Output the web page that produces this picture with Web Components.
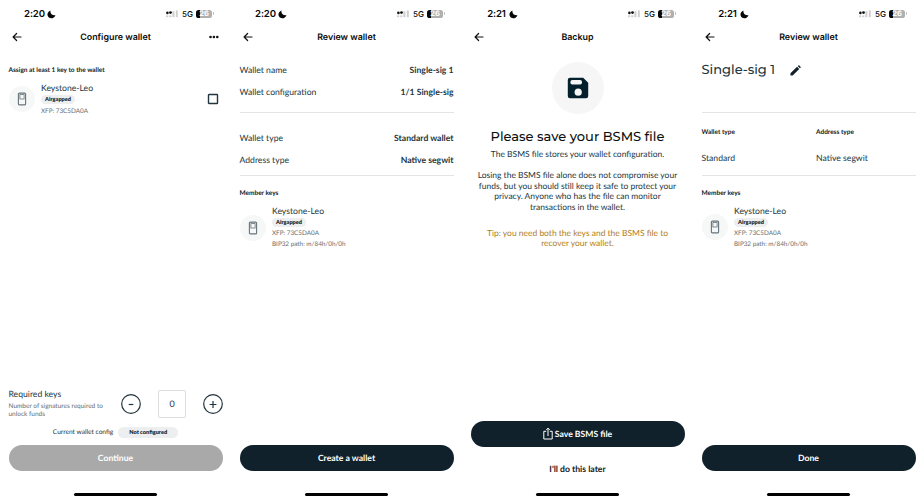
<!DOCTYPE html>
<html lang="en">
<head>
<meta charset="utf-8">
<title>Wallet setup</title>
<style>
  body {
    margin: 0;
    width: 924px;
    height: 500px;
    overflow: hidden;
    display: grid;
    grid-template-columns: repeat(4, 231px);
    background: #fff;
    color: #22363e;
    font-family: Lato, "Liberation Sans", sans-serif;
    font-size: 8.65px;
    text-rendering: geometricPrecision;
  }
</style>
</head>
<body>
  <phone-screen time="2:20" heading="Configure wallet" menu>
    <section-label style="margin-top: 17px">Assign at least 1 key to the wallet</section-label>
    <key-card style="margin-top: 5px" name="Keystone-Leo" xfp="73C5DA0A" selectable></key-card>
    <key-counter slot="footer" value="0"></key-counter>
    <app-button slot="footer" disabled>Continue</app-button>
  </phone-screen>

  <phone-screen time="2:20" heading="Review wallet">
    <detail-row style="margin-top: 12.25px" label="Wallet name">Single-sig 1</detail-row>
    <detail-row label="Wallet configuration">1/1 Single-sig</detail-row>
    <rule-line style="margin-top: 9.25px"></rule-line>
    <detail-row style="margin-top: 14.75px" label="Wallet type">Standard wallet</detail-row>
    <detail-row label="Address type">Native segwit</detail-row>
    <rule-line style="margin-top: 5px"></rule-line>
    <section-label style="margin-top: 10.5px">Member keys</section-label>
    <key-card style="margin-top: 5px" name="Keystone-Leo" xfp="73C5DA0A" path="m/84h/0h/0h"></key-card>
    <app-button slot="footer">Create a wallet</app-button>
  </phone-screen>

  <phone-screen time="2:21" heading="Backup">
    <backup-notice heading="Please save your BSMS file">
      <span slot="lead">The BSMS file stores your wallet configuration.</span>
      Losing the BSMS file alone does not compromise your<br>funds, but you should still keep it safe to protect your<br>privacy. Anyone who has the file can monitor<br>transactions in the wallet.
      <span slot="tip">Tip: you need both the keys and the BSMS file to<br>recover your wallet.</span>
    </backup-notice>
    <app-button slot="footer" share>Save BSMS file</app-button>
    <app-button slot="footer" plain>I'll do this later</app-button>
  </phone-screen>

  <phone-screen time="2:21" heading="Review wallet">
    <wallet-title>Single-sig 1</wallet-title>
    <rule-line></rule-line>
    <wallet-types>
      <section-label>Wallet type</section-label>
      <section-label>Address type</section-label>
      <span>Standard</span>
      <span>Native segwit</span>
    </wallet-types>
    <rule-line></rule-line>
    <section-label style="margin-top: 10.5px">Member keys</section-label>
    <key-card style="margin-top: 5px" name="Keystone-Leo" xfp="73C5DA0A" path="m/84h/0h/0h"></key-card>
    <app-button slot="footer">Done</app-button>
  </phone-screen>

<script>
class PhoneScreen extends HTMLElement {
  connectedCallback() {
    this.attachShadow({ mode: 'open' });
    this.shadowRoot.innerHTML = `
      <style>
        :host {
          display: flex;
          flex-direction: column;
          box-sizing: border-box;
          width: 231px;
          height: 500px;
          padding: 0 8.5px;
          background: #fff;
        }
        svg { display: block; }
        .status {
          display: flex;
          align-items: center;
          height: 28px;
          padding: 0 9px 0 15.5px;
          color: #080808;
          font-family: Inter, sans-serif;
        }
        .time {
          width: 21px;
          margin-right: 1.5px;
          font-size: 9.6px;
          font-weight: 600;
          letter-spacing: -0.1px;
          text-align: center;
        }
        .signal { margin-left: auto; }
        .net {
          margin: 0 3.5px 0 4px;
          font-size: 8px;
          font-weight: 500;
        }
        .battery {
          display: flex;
          align-items: center;
          gap: 0.6px;
        }
        .cell {
          width: 15.5px;
          height: 8.4px;
          border-radius: 2.6px;
          background: linear-gradient(90deg, #080808 26%, #b0b0b0 26%);
          color: #fff;
          font-size: 7.6px;
          font-weight: 700;
          line-height: 8.6px;
          text-align: center;
        }
        .nub {
          width: 1px;
          height: 3px;
          border-radius: 0 1px 1px 0;
          background: #bbb;
        }
        .nav {
          display: grid;
          grid-template-columns: 20px 1fr 20px;
          align-items: center;
          height: 19px;
          color: #0b0b0b;
        }
        .nav .back { margin: -1px 0 0 3.5px; }
        h1 {
          margin: 0;
          font: 600 8.9px/18px Inter, sans-serif;
          text-align: center;
        }
        .dots { margin: -1px 0 0 6px; }
        main { flex: 1; }
        .home {
          width: 83px;
          height: 3px;
          margin: 22px auto 4px;
          border-radius: 2px;
          background: #000;
        }
      </style>
      <div class="status">
        <span class="time">${this.getAttribute('time')}</span>
        <svg width="9" height="9" viewBox="0 0 9 9"><path d="M3.5 .4C2.9 3.4 5 5.6 8.5 5.2 7.5 8.2 4.1 9.2 1.9 7.5-.6 5.5.3 1.5 3.5.4z" fill="#080808"/></svg>
        <svg class="signal" width="12" height="8" viewBox="0 0 12 8">
          <g fill="#cfcfcf">
            <rect x="0" y="5.4" width="2.2" height="1.8"/><rect x="3.2" y="5.4" width="2.2" height="1.8"/>
            <rect x="6.4" y="1.2" width="2" height="6"/><rect x="9.8" y=".4" width="2" height="6.8"/>
          </g>
          <circle cx="1.4" cy="2.9" r="1.3" fill="#111"/><circle cx="4.5" cy="2.6" r="1.4" fill="#111"/>
        </svg>
        <span class="net">5G</span>
        <div class="battery"><div class="cell">26</div><div class="nub"></div></div>
      </div>
      <div class="nav">
        <svg class="back" width="10" height="10" viewBox="0 0 10 10" fill="none" stroke="#111" stroke-width="1.2" stroke-linecap="round" stroke-linejoin="round"><path d="M9 5H1.2M4.6 1.5L1.1 5l3.5 3.5"/></svg>
        <h1>${this.getAttribute('heading')}</h1>
        ${this.hasAttribute('menu') ? '<svg class="dots" width="10" height="4" viewBox="0 0 10 4" fill="#111"><circle cx="1.5" cy="2" r="1.3"/><circle cx="4.9" cy="2" r="1.3"/><circle cx="8.3" cy="2" r="1.3"/></svg>' : ''}
      </div>
      <main><slot></slot></main>
      <slot name="footer"></slot>
      <div class="home"></div>
    `;
  }
}

class SectionLabel extends HTMLElement {
  connectedCallback() {
    this.attachShadow({ mode: 'open' });
    this.shadowRoot.innerHTML = `
      <style>
        :host {
          display: block;
          padding-top: 1px;
          color: #111a1e;
          font-size: 6.5px;
          font-weight: 700;
          line-height: 12px;
        }
      </style>
      <slot></slot>
    `;
  }
}

class RuleLine extends HTMLElement {
  connectedCallback() {
    this.attachShadow({ mode: 'open' });
    this.shadowRoot.innerHTML = `
      <style>
        :host {
          display: block;
          height: 1px;
          background: #e3e4e6;
        }
      </style>
    `;
  }
}

class PillBadge extends HTMLElement {
  connectedCallback() {
    this.attachShadow({ mode: 'open' });
    this.shadowRoot.innerHTML = `
      <style>
        :host {
          display: block;
          box-sizing: border-box;
          width: 34px;
          height: 9px;
          border-radius: 5px;
          background: #eceeef;
          color: #182a32;
          font-size: 5.6px;
          font-weight: 800;
          line-height: 9px;
          text-align: center;
        }
        :host([wide]) {
          width: 60px;
          height: 11px;
          line-height: 11px;
          border-radius: 6px;
        }
      </style>
      <slot></slot>
    `;
  }
}

class KeyCard extends HTMLElement {
  connectedCallback() {
    const path = this.getAttribute('path');
    this.attachShadow({ mode: 'open' });
    this.shadowRoot.innerHTML = `
      <style>
        :host {
          display: flex;
          align-items: center;
        }
        .avatar {
          display: grid;
          place-items: center;
          width: 26px;
          height: 26px;
          margin-right: 6.5px;
          border-radius: 50%;
          background: #f6f7f7;
        }
        .info { flex: 1; }
        .name {
          font-size: 8.65px;
          line-height: 12px;
        }
        pill-badge { margin: 1px 0 1.5px; }
        .meta {
          color: #666d71;
          font-size: 6.35px;
          line-height: 11px;
        }
        .check { margin-right: 4px; }
      </style>
      <div class="avatar">
        <svg width="10" height="14" viewBox="0 0 10 14" fill="none" stroke="#66747a"><rect x="1.4" y="1.1" width="7.2" height="11.8" rx="1" stroke-width="1.1"/><rect x="2.9" y="2.6" width="4.2" height="4.4" stroke-width=".8"/></svg>
      </div>
      <div class="info">
        <div class="name">${this.getAttribute('name')}</div>
        <pill-badge>Airgapped</pill-badge>
        <div class="meta">XFP: ${this.getAttribute('xfp')}</div>
        ${path ? `<div class="meta">BIP32 path: ${path}</div>` : ''}
      </div>
      ${this.hasAttribute('selectable') ? '<svg class="check" width="12" height="12" viewBox="0 0 12 12" fill="none" stroke="#22363e" stroke-width="1.4"><rect x="1.5" y="1.5" width="9" height="9" rx=".5"/></svg>' : ''}
    `;
  }
}

class DetailRow extends HTMLElement {
  connectedCallback() {
    this.attachShadow({ mode: 'open' });
    this.shadowRoot.innerHTML = `
      <style>
        :host {
          display: flex;
          justify-content: space-between;
          line-height: 21.5px;
        }
        b { font-weight: 700; }
      </style>
      <span>${this.getAttribute('label')}</span>
      <b><slot></slot></b>
    `;
  }
}

class KeyCounter extends HTMLElement {
  connectedCallback() {
    this.attachShadow({ mode: 'open' });
    this.shadowRoot.innerHTML = `
      <style>
        :host { display: block; }
        .row {
          display: flex;
          align-items: center;
          margin-right: -2px;
        }
        .text { width: 111.5px; }
        .title {
          font-size: 8.65px;
          line-height: 12px;
        }
        .hint {
          margin-top: 3px;
          color: #666d71;
          font-size: 6.5px;
          line-height: 8px;
        }
        .row svg {
          display: block;
          flex: none;
          fill: none;
          stroke: #22343c;
          stroke-width: 1.2;
        }
        .value {
          box-sizing: border-box;
          flex: none;
          width: 28px;
          height: 28px;
          margin: 0 15.5px 0 16px;
          border: 1px solid #dcdfe0;
          border-radius: 2px;
          font-size: 9px;
          line-height: 26px;
          text-align: center;
        }
        .config {
          display: flex;
          align-items: center;
          justify-content: center;
          gap: 5px;
          margin: 8px 0 7px;
          font-size: 6.6px;
          line-height: 11px;
        }
      </style>
      <div class="row">
        <div class="text">
          <div class="title">Required keys</div>
          <div class="hint">Number of signatures required to<br>unlock funds</div>
        </div>
        <svg width="22" height="22" viewBox="0 0 22 22"><circle cx="11" cy="11" r="9.3"/><path d="M8.7 11.5h4.6"/></svg>
        <div class="value">${this.getAttribute('value')}</div>
        <svg width="22" height="22" viewBox="0 0 22 22"><circle cx="11" cy="11" r="9.3"/><path d="M7.6 11.5h6.8M11 8.1v6.8"/></svg>
      </div>
      <div class="config">Current wallet config<pill-badge wide>Not configured</pill-badge></div>
    `;
  }
}

class BackupNotice extends HTMLElement {
  connectedCallback() {
    this.attachShadow({ mode: 'open' });
    this.shadowRoot.innerHTML = `
      <style>
        :host {
          display: block;
          padding-top: 15px;
          font-size: 8.47px;
          line-height: 10.6px;
          text-align: center;
          white-space: nowrap;
        }
        .disc {
          display: grid;
          place-items: center;
          width: 52px;
          height: 52px;
          margin: 0 auto 13.5px;
          border-radius: 50%;
          background: #f6f6f6;
        }
        h2 {
          margin: 0 -10px 3.5px;
          color: #0c0f10;
          font: 500 13px/18px Montserrat, Inter, sans-serif;
        }
        .body { margin: 10.4px -6px 15.2px; }
        .tip { color: #b07d1e; }
      </style>
      <div class="disc">
        <svg width="22" height="22" viewBox="0 0 22 22"><path d="M3 .8h13.2L21.2 5.8V19a2.2 2.2 0 0 1-2.2 2.2H3A2.2 2.2 0 0 1 .8 19V3A2.2 2.2 0 0 1 3 .8z" fill="#04202c"/><rect x="3.4" y="3" width="11.6" height="4.6" rx="2" fill="#f6f6f6"/><circle cx="11.2" cy="15.2" r="3.6" fill="#f6f6f6"/></svg>
      </div>
      <h2>${this.getAttribute('heading')}</h2>
      <div><slot name="lead"></slot></div>
      <div class="body"><slot></slot></div>
      <div class="tip"><slot name="tip"></slot></div>
    `;
  }
}

class WalletTitle extends HTMLElement {
  connectedCallback() {
    this.attachShadow({ mode: 'open' });
    this.shadowRoot.innerHTML = `
      <style>
        :host {
          display: flex;
          align-items: center;
          gap: 14.5px;
          height: 46.5px;
          padding-bottom: 18px;
          color: #22363e;
          font: 500 13px/18px Montserrat, Inter, sans-serif;
        }
      </style>
      <slot></slot>
      <svg width="11" height="11" viewBox="0 0 12 12" fill="#10222b"><path d="M.5 9.1L7.7 1.9l2.4 2.4L2.9 11.5H.5zM8.4 1.2l.7-.7q.5-.4 1 0l1.4 1.4q.4.5 0 1l-.7.7z"/></svg>
    `;
  }
}

class WalletTypes extends HTMLElement {
  connectedCallback() {
    this.attachShadow({ mode: 'open' });
    this.shadowRoot.innerHTML = `
      <style>
        :host {
          display: grid;
          grid-template-columns: 114.5px 1fr;
          grid-template-rows: 13px 14px;
          row-gap: 12px;
          box-sizing: border-box;
          height: 62.5px;
          padding-top: 13.5px;
          line-height: 14px;
        }
      </style>
      <slot></slot>
    `;
  }
}

class AppButton extends HTMLElement {
  connectedCallback() {
    this.attachShadow({ mode: 'open' });
    this.shadowRoot.innerHTML = `
      <style>
        :host {
          display: flex;
          align-items: center;
          justify-content: center;
          gap: 2px;
          box-sizing: border-box;
          height: 26px;
          padding-bottom: 1px;
          border-radius: 13px;
          background: #10212b;
          color: #fff;
          font-weight: 700;
        }
        :host([disabled]) { background: #a9a9a9; }
        :host([share]) { margin-bottom: 14px; }
        :host([plain]) {
          height: 16px;
          margin-bottom: -6px;
          background: none;
          color: #10212b;
        }
      </style>
      ${this.hasAttribute('share') ? '<svg width="10" height="13" viewBox="0 0 10 13" fill="none" stroke="#fff"><path d="M3.2 4.3H.8v7.7h8.4V4.3H6.8M5 9V1.5M3.3 2.8L5 1.1l1.7 1.7"/></svg>' : ''}
      <slot></slot>
    `;
  }
}

customElements.define('phone-screen', PhoneScreen);
customElements.define('section-label', SectionLabel);
customElements.define('rule-line', RuleLine);
customElements.define('pill-badge', PillBadge);
customElements.define('key-card', KeyCard);
customElements.define('detail-row', DetailRow);
customElements.define('key-counter', KeyCounter);
customElements.define('backup-notice', BackupNotice);
customElements.define('wallet-title', WalletTitle);
customElements.define('wallet-types', WalletTypes);
customElements.define('app-button', AppButton);
</script>
</body>
</html>
